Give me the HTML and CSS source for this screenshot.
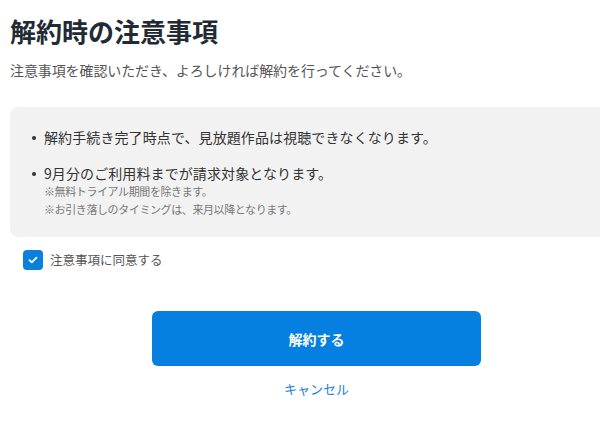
FILE: index.html
```html
<!DOCTYPE html>
<html lang="ja">
<head>
<meta charset="utf-8">
<link rel="stylesheet" href="styles.css">
</head>
<body>
<div class="page">
  <h1 class="title">解約時の注意事項</h1>
  <p class="lead">注意事項を確認いただき、よろしければ解約を行ってください。</p>
  <div class="notice">
    <ul class="items">
      <li class="item">解約手続き完了時点で、見放題作品は視聴できなくなります。</li>
      <li class="item">9月分のご利用料までが請求対象となります。
        <div class="notes">
          <div class="note">※無料トライアル期間を除きます。</div>
          <div class="note">※お引き落しのタイミングは、来月以降となります。</div>
        </div>
      </li>
    </ul>
  </div>
  <label class="agree">
    <span class="check"><svg width="10" height="8" viewBox="0 0 10 8"><path d="M1.5 4.2 L3.8 6.3 L8.5 1.7" fill="none" stroke="#fff" stroke-width="1.8" stroke-linecap="round" stroke-linejoin="round"/></svg></span>
    <span class="agree-text">注意事項に同意する</span>
  </label>
  <div class="actions">
    <button class="primary">解約する</button>
    <a class="cancel">キャンセル</a>
  </div>
</div>
</body>
</html>
```
FILE: styles.css
```css
html, body {
  margin: 0;
  padding: 0;
  background: #fff;
  overflow: hidden;
}
body {
  font-family: "Noto Sans CJK JP", "Noto Sans", sans-serif;
}
.page {
  width: 613px;
  margin-left: 10px;
  padding-top: 13px;
}
.title {
  margin: 0;
  font-size: 26px;
  line-height: 36px;
  font-weight: 700;
  color: #222a33;
}
.lead {
  margin: 11px 0 0;
  font-size: 14px;
  line-height: 20px;
  color: #555;
  letter-spacing: -0.1px;
}
.notice {
  margin-top: 27px;
  background: #f2f2f2;
  border-radius: 8px;
  padding: 20px 0 19px 34px;
}
.items {
  list-style: none;
  margin: 0;
  padding: 0;
}
.item {
  position: relative;
  font-size: 14px;
  line-height: 20px;
  color: #333;
  letter-spacing: 0.1px;
}
.item + .item {
  margin-top: 16px;
}
.item::before {
  content: "";
  position: absolute;
  left: -12px;
  top: 9px;
  width: 4px;
  height: 4px;
  border-radius: 50%;
  background: #333;
}
.notes {
  margin-top: -1px;
}
.note {
  font-size: 11px;
  line-height: 18px;
  color: #777;
  letter-spacing: -0.4px;
}
.agree {
  display: flex;
  align-items: center;
  gap: 7px;
  margin: 13px 0 0 13px;
}
.check {
  width: 20px;
  height: 20px;
  border-radius: 4px;
  background: #0a7fdd;
  display: flex;
  align-items: center;
  justify-content: center;
}
.agree-text {
  font-size: 12.5px;
  line-height: 20px;
  color: #555;
}
.actions {
  display: flex;
  flex-direction: column;
  align-items: center;
  margin-top: 41px;
}
.primary {
  width: 329px;
  height: 55px;
  border: none;
  border-radius: 6px;
  background: #0580e0;
  color: #fff;
  font-family: inherit;
  font-size: 14px;
  font-weight: 700;
}
.cancel {
  margin-top: 13px;
  font-size: 13px;
  line-height: 20px;
  color: #1a80d9;
}
```
